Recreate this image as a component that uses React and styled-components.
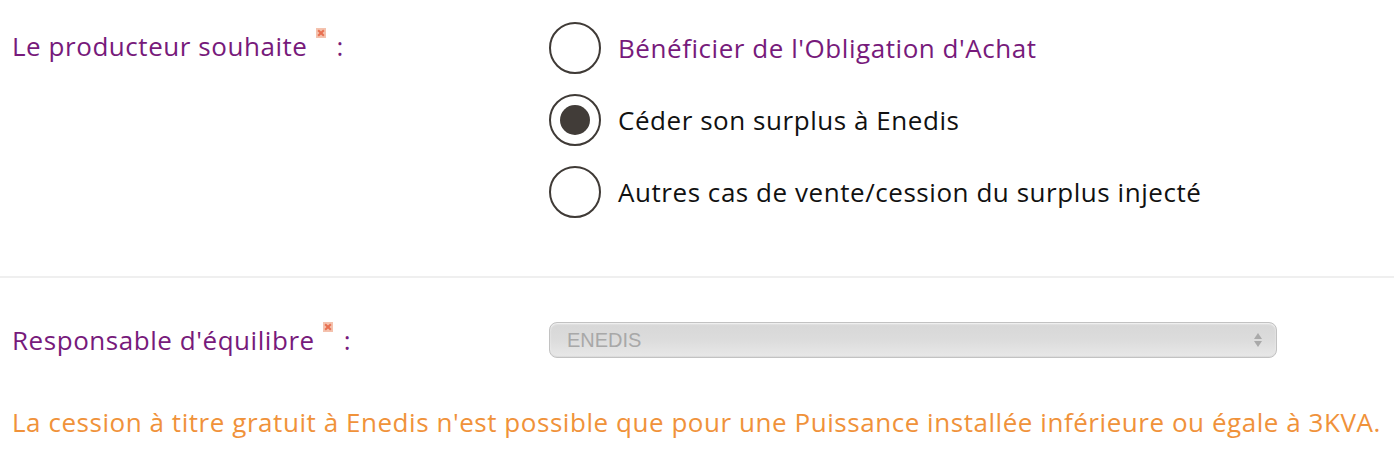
import React, { useState } from 'react'
import styled, { createGlobalStyle } from 'styled-components'

const GlobalStyle = createGlobalStyle`
    body {
        margin: 0;
        background: #fff;
        font-family: "Open Sans", "Noto Sans", sans-serif;
    }
`

const Form = styled.div`
    padding-top: 22px;
`

const Row = styled.div`
    display: grid;
    grid-template-columns: 537px 1fr;
    padding: 0 12px;
    align-items: ${props => props.center ? 'center' : 'start'};
    margin-top: ${props => props.top || 0}px;
`

const Label = styled.label`
    color: #771a7b;
    font-size: 26px;
    letter-spacing: 0.55px;
    line-height: 48px;
`

const Required = styled.span`
    display: inline-block;
    width: 10px;
    height: 10px;
    margin: 0 11px 0 8px;
    vertical-align: 18px;
    background: #f4c2ae;
    position: relative;

    &::before, &::after {
        content: '';
        position: absolute;
        left: 1px;
        top: 4px;
        width: 8px;
        height: 2px;
        background: #e87051;
        transform: rotate(45deg);
    }
    &::after {
        transform: rotate(-45deg);
    }
`

const Options = styled.div`
    display: flex;
    flex-direction: column;
    gap: 20px;
`

const Option = styled.label`
    display: flex;
    align-items: center;
    gap: 17px;
    font-size: 26px;
    letter-spacing: 0.55px;
    color: ${props => props.highlight ? '#771a7b' : '#111'};
    cursor: pointer;
`

const Radio = styled.span`
    width: 48px;
    height: 48px;
    border: 2px solid #3f3a36;
    border-radius: 50%;
    display: flex;
    align-items: center;
    justify-content: center;
    flex-shrink: 0;

    &::after {
        content: '';
        width: 30px;
        height: 30px;
        border-radius: 50%;
        background: #413c38;
        display: ${props => props.checked ? 'block' : 'none'};
    }
`

const Divider = styled.hr`
    border: 0;
    border-top: 2px solid #efefef;
    margin: 58px 0 0;
`

const Select = styled.div`
    height: 36px;
    width: 728px;
    border: 1px solid #c2c2c2;
    border-radius: 8px;
    background: linear-gradient(#d7d7d7, #dcdcdc 50%, #e8e8e8);
    box-shadow: inset 0 1px 2px rgba(255, 255, 255, 0.8), inset 0 -1px 1px rgba(0, 0, 0, 0.06);
    display: flex;
    align-items: center;
    justify-content: space-between;
    padding: 0 14px 0 17px;
    box-sizing: border-box;
    font-family: "Liberation Sans", Arial, sans-serif;
    font-size: 20px;
    color: #a8a8a8;
`

const Arrows = styled.span`
    display: flex;
    flex-direction: column;
    gap: 2px;

    &::before, &::after {
        content: '';
        border-left: 4px solid transparent;
        border-right: 4px solid transparent;
    }
    &::before {
        border-bottom: 6px solid #a9a9a9;
    }
    &::after {
        border-top: 6px solid #a9a9a9;
    }
`

const Notice = styled.p`
    margin: 40px 0 0;
    padding: 0 12px;
    font-size: 26px;
    letter-spacing: 0.55px;
    color: #f0923a;
    white-space: nowrap;
`

const choix = [
    { id: 'oa', texte: "Bénéficier de l'Obligation d'Achat", highlight: true },
    { id: 'enedis', texte: 'Céder son surplus à Enedis' },
    { id: 'autres', texte: 'Autres cas de vente/cession du surplus injecté' },
]

export default function App() {

    const [choisi, setChoisi] = useState('enedis')

    return (<Form>
        <GlobalStyle />

        <Row>
            <Label>Le producteur souhaite<Required />:</Label>
            <Options>
                {choix.map(c =>
                    <Option key={c.id} highlight={c.highlight} onClick={() => setChoisi(c.id)}>
                        <Radio checked={choisi === c.id} />
                        {c.texte}
                    </Option>
                )}
            </Options>
        </Row>

        <Divider />

        <Row center top={38}>
            <Label>Responsable d'équilibre<Required />:</Label>
            <Select>
                ENEDIS
                <Arrows />
            </Select>
        </Row>

        <Notice>La cession à titre gratuit à Enedis n'est possible que pour une Puissance installée inférieure ou égale à 3KVA.</Notice>
    </Form>)
}
